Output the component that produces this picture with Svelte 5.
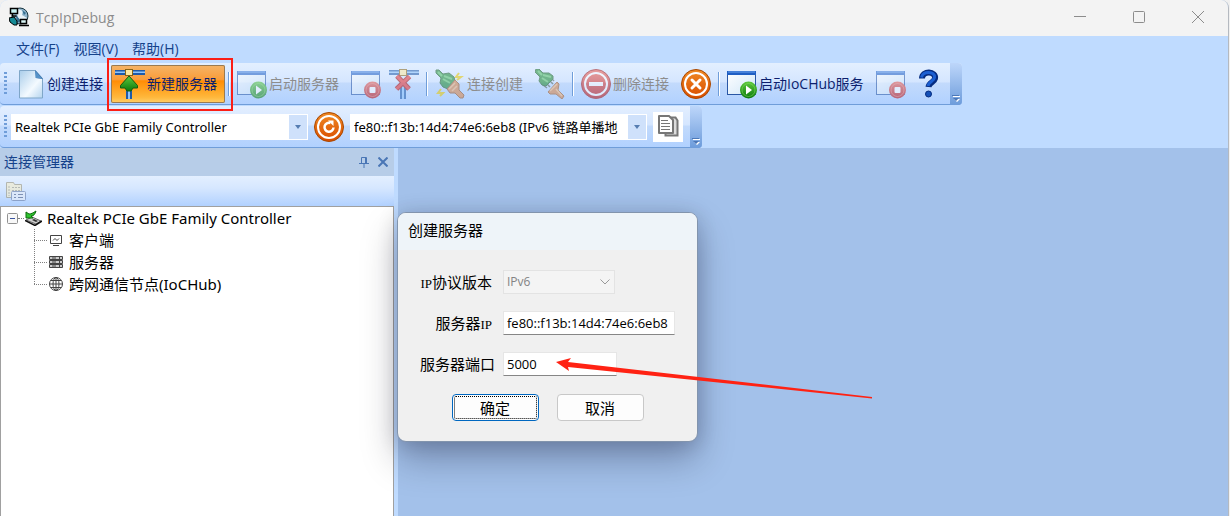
<script lang="ts">
    type Tool = {
        icon?: string;
        label?: string;
        disabled?: boolean;
        active?: boolean;
        sep?: boolean;
    };

    const menus = ["文件(F)", "视图(V)", "帮助(H)"];

    const tools: Tool[] = [
        { icon: "page", label: "创建连接" },
        { icon: "server", label: "新建服务器", active: true },
        { sep: true },
        { icon: "start", label: "启动服务器", disabled: true },
        { icon: "stop", disabled: true },
        { icon: "drop", disabled: true },
        { sep: true },
        { icon: "plug", label: "连接创建", disabled: true },
        { icon: "unplug", disabled: true },
        { sep: true },
        { icon: "minus", label: "删除连接", disabled: true },
        { icon: "cancel" },
        { sep: true },
        { icon: "start", label: "启动IoCHub服务" },
        { icon: "stop", disabled: true },
        { icon: "help" },
    ];

    const nodes = [
        { icon: "client", label: "客户端" },
        { icon: "rack", label: "服务器" },
        { icon: "globe", label: "跨网通信节点(IoCHub)" },
    ];

    let ip = $state("fe80::f13b:14d4:74e6:6eb8");
    let port = $state("5000");
    let dialogOpen = $state(true);
    let expanded = $state(true);

    const close = () => (dialogOpen = false);
</script>

<svg class="defs" width="0" height="0" aria-hidden="true">
    <defs>
        <linearGradient id="paper" x1="0" y1="0" x2="1" y2="1">
            <stop offset="0" stop-color="#a9cdea" />
            <stop offset="0.6" stop-color="#f4faff" />
            <stop offset="1" stop-color="#b4d4ee" />
        </linearGradient>
        <linearGradient id="pane" x1="0" y1="0" x2="1" y2="1">
            <stop offset="0" stop-color="#ffffff" />
            <stop offset="1" stop-color="#cfe6f8" />
        </linearGradient>
        <linearGradient id="green" x1="0" y1="0" x2="0" y2="1">
            <stop offset="0" stop-color="#5cc83c" />
            <stop offset="1" stop-color="#0c7a0c" />
        </linearGradient>
        <linearGradient id="red" x1="0" y1="0" x2="0" y2="1">
            <stop offset="0" stop-color="#f06050" />
            <stop offset="1" stop-color="#b80c0c" />
        </linearGradient>
        <linearGradient id="orange" x1="0" y1="0" x2="0" y2="1">
            <stop offset="0" stop-color="#f08a24" />
            <stop offset="1" stop-color="#d84c00" />
        </linearGradient>
    </defs>
</svg>

{#snippet glyph(name: string | undefined)}
    <svg class="icon" width="30" height="30" viewBox="0 0 30 30" aria-hidden="true">
        {#if name === "page"}
            <path d="M4.500 1.500h16l7 8v19.500h-23z" fill="url(#paper)" stroke="#7fa6c8" />
            <path d="M20 1l8 9-7-1z" fill="#2a66a4" />
            <path d="M20.500 9V2l6.500 7.500z" fill="#5592c8" />
        {:else if name === "server" || name === "drop"}
            <path d="M0 1h30v5H0zM11 14h6v16h-6z" fill="#1f5aa8" />
            <path d="M0 2.500h30v1.500H0zM13 14h2v16h-2z" fill="#8fc4fa" />
            <rect x="10.500" y="0.500" width="7" height="6" fill="#ffe9a0" stroke="#8a6414" />
            {#if name === "server"}
                <path d="M14 7l8.500 9.500v2.500h-4.500l-2 3h-4l-2-3H5.500v-2.500z" fill="url(#green)" stroke="#125c10" />
            {:else}
                <path d="M8 7l12 13M20.500 7.500L7.500 20" stroke="#a80d0d" stroke-width="5" />
                <path d="M8 7l12 13M20.500 7.500L7.500 20" stroke="#e83030" stroke-width="3" />
            {/if}
        {:else if name === "start" || name === "stop"}
            <rect x="0.500" y="2.500" width="28" height="23" fill="url(#pane)" stroke="#2a57a5" />
            <path d="M0 2h29v4H0z" fill="#1f5fc4" />
            <path d="M1 2.500h27v1H1z" fill="#6da5ee" />
            {#if name === "start"}
                <circle cx="21.500" cy="21" r="8.500" fill="url(#green)" />
                <circle cx="21.500" cy="21" r="6.500" fill="none" stroke="#8ce066" stroke-opacity="0.5" />
                <path d="M19 16.500l6 4.500-6 4.500z" fill="#fff" />
            {:else}
                <circle cx="21.500" cy="21" r="8.500" fill="url(#red)" />
                <circle cx="21.500" cy="21" r="6.500" fill="none" stroke="#ff9a8c" stroke-opacity="0.5" />
                <rect x="18.500" y="18" width="6" height="6" rx="1" fill="#fff" />
            {/if}
        {:else if name === "plug"}
            <path d="M24 4l-3 4h5l-4 3M6 20l-3 4h5l-3 3" fill="none" stroke="#e8c800" stroke-width="2" />
            <path d="M1 1h3l4 4 6-1 5 4 1 4-7 8-5-2-3-4 1-5-5-5z" fill="#1d8a30" stroke="#185c22" />
            <path d="M9 7l8 3M8 10l7 4M3 3l4 4" stroke="#57c062" stroke-width="2" />
            <path d="M20 11l4 4 0 6 5 5-1 3-3 0-5-5-5 0-3-4z" fill="#d98444" stroke="#955322" />
            <path d="M20 14l-6 6M22 17l-5 5" stroke="#f0b47c" stroke-width="1.500" />
        {:else if name === "unplug"}
            <path d="M11 14l4 4M14 11l4 4M8 16l4 3M16 9l3 3" stroke="#55685a" stroke-width="1.500" />
            <path d="M1 0h3l4 4 6 0 4 3 0 3-7 7-4-1-3-4 1-4-5-5z" fill="#1d8a30" stroke="#185c22" />
            <path d="M8 6l8 2M7 9l6 4M3 2l4 4" stroke="#57c062" stroke-width="2" />
            <path d="M22 13l2 2-1 6 6 6-2 3-6-5-6 0-2-2z" fill="#d98444" stroke="#a05a24" />
            <path d="M22 15l-7 7M21 20l6 7" stroke="#f3b77c" stroke-width="1.500" />
        {:else if name === "minus" || name === "cancel" || name === "refresh"}
            <circle cx="15" cy="15" r="14.500" fill={name === "minus" ? "url(#red)" : "url(#orange)"} stroke={name === "minus" ? "#a01414" : "#a84800"} />
            <circle cx="15" cy="15" r="11" fill="none" stroke="#fff" stroke-width="2" />
            {#if name === "minus"}
                <path d="M8 15h14" stroke="#fff" stroke-width="4" />
            {:else if name === "cancel"}
                <path d="M11 11l8 8M19 11l-8 8" stroke="#fff" stroke-width="3" stroke-linecap="round" />
            {:else}
                <path d="M19.500 15.500a4.500 4.500 0 1 1-3-4.500" fill="none" stroke="#fff" stroke-width="2.500" />
                <path d="M14 8.500h5.500v5.500z" fill="#fff" />
            {/if}
        {:else if name === "help"}
            <path d="M8 9.500c0-8.500 14.500-7.500 13 0-1 4-6 4-6.500 8.500" fill="none" stroke="#062c80" stroke-width="6" />
            <path d="M7.500 8.500c1-7 14-6.500 13 0-.5 4-6 4-6.500 8.500" fill="none" stroke="#1c5fd2" stroke-width="3" />
            <circle cx="14.500" cy="25" r="3" fill="#1450b8" stroke="#062c80" />
        {:else if name === "copy"}
            <path d="M12.500 5.500h10l2 3v15h-12z" fill="#ddd" stroke="#777" stroke-width="2" />
            <path d="M6 4h10l4 4v13H6z" fill="#fff" stroke="#777" stroke-width="2" stroke-linejoin="round" />
            <path d="M8 8.500h7M8 11.500h9M8 14.500h9M8 17.500h9" stroke="#777" />
        {/if}
    </svg>
{/snippet}

{#snippet cap()}
    <button class="cap" aria-label="更多">
        <svg width="8" height="8" viewBox="0 0 8 8">
            <path d="M1 2h7v1H1zM2 5h6L5 8z" fill="#fff" />
            <path d="M0 1h7v1H0zM1 4h6L4 7z" fill="#4c78b8" />
        </svg>
    </button>
{/snippet}

<div class="window">
    <header class="titlebar">
        <svg width="20" height="20" viewBox="0 0 20 20" aria-hidden="true">
            <circle cx="11" cy="9" r="8" fill="#8fb4cc" stroke="#17343f" />
            <path d="M9 2l5 2-1 4 5 3-3 5-5-3-2-6z" fill="#e9f3f8" />
            <path d="M13 3l4 3-2 2zM7 8l5 6-4 2z" fill="#356f91" />
            <path d="M1.500 1.500h7v5h-7zM3.500 7v2h4" fill="#c9f3f3" stroke="#000" stroke-width="1.500" />
            <path d="M0 11l5-1 3 4v4H5l-4-3z" fill="#168b96" stroke="#000" />
            <path d="M11.500 12.500h6v4h-6zM10 18.500h10" fill="#d8f5f5" stroke="#000" stroke-width="1.500" />
        </svg>
        <h1>TcpIpDebug</h1>
        <div class="controls">
            <button aria-label="最小化"><svg width="12" height="12" viewBox="0 0 12 12"><path d="M0 5.500h12" /></svg></button>
            <button aria-label="最大化"><svg width="12" height="12" viewBox="0 0 12 12"><rect x="0.500" y="0.500" width="11" height="11" rx="1" /></svg></button>
            <button aria-label="关闭"><svg width="12" height="12" viewBox="0 0 12 12"><path d="M0 0l12 12M12 0L0 12" /></svg></button>
        </div>
    </header>

    <nav class="menubar">
        {#each menus as menu}
            <button>{menu}</button>
        {/each}
    </nav>

    <div class="toolbar">
        <span class="grip"></span>
        {#each tools as tool}
            {#if tool.sep}
                <span class="sep"></span>
            {:else}
                <button class="tool" class:active={tool.active} disabled={tool.disabled} aria-label={tool.label ?? tool.icon}>
                    {@render glyph(tool.icon)}
                    {#if tool.label}<span>{tool.label}</span>{/if}
                </button>
            {/if}
        {/each}
        {@render cap()}
    </div>

    <div class="toolbar adapters">
        <span class="grip"></span>
        <div class="combo">
            <select aria-label="网卡"><option>Realtek PCIe GbE Family Controller</option></select>
            <span class="arrow"></span>
        </div>
        <button class="plain" aria-label="刷新">{@render glyph("refresh")}</button>
        <div class="combo">
            <select aria-label="地址"><option>fe80::f13b:14d4:74e6:6eb8 (IPv6 链路单播地</option></select>
            <span class="arrow"></span>
        </div>
        <button class="plain copy" aria-label="复制">{@render glyph("copy")}</button>
        {@render cap()}
    </div>

    <main>
        <aside>
            <div class="caption">
                <h2>连接管理器</h2>
                <button aria-label="固定"><svg width="10" height="12" viewBox="0 0 10 12"><path d="M2.500 7V1.500h5V7M6.500 2v5M0 7.500h10M5 8v4" /></svg></button>
                <button aria-label="关闭"><svg width="10" height="10" viewBox="0 0 10 10"><path d="M0.500 0.500l9 9M9.500 0.500l-9 9" stroke-width="2" /></svg></button>
            </div>
            <div class="panel-tools">
                <button disabled aria-label="属性">
                    <svg width="20" height="19" viewBox="0 0 20 19">
                        <path d="M0.500 0.500h7l1 2h7v13h-15z" fill="#f3ecc9" stroke="#9a957c" />
                        <path d="M3 4v10M6 5.500h8M6 8.500h8" stroke="#a09c88" stroke-dasharray="2 1" />
                        <rect x="5.500" y="9.500" width="14" height="9" rx="1" fill="#e8eef8" stroke="#6b7fa8" />
                        <path d="M8 12.500h2M12 12.500h5M8 15.500h2M12 15.500h5" stroke="#4f5f85" />
                    </svg>
                </button>
            </div>
            <div class="tree">
                <div class="root">
                    <button class="expander" aria-label="展开" onclick={() => (expanded = !expanded)}>
                        <svg width="11" height="11" viewBox="0 0 11 11"><rect x="0.500" y="0.500" width="10" height="10" rx="1" fill="#f8f8f8" stroke="#919191" /><path d="M3 5.500h5" stroke="#3c56a0" /></svg>
                    </button>
                    <span class="dots"></span>
                    <svg width="17" height="16" viewBox="0 0 17 16" aria-hidden="true">
                        <path d="M1 10l6-3 9 4-5 3z" fill="#d0d0d0" stroke="#666" />
                        <path d="M0 10.500l10 5 7-4.500" fill="none" stroke="#111" stroke-width="1.500" />
                        <path d="M9 9l4 2-2 1-4-2z" fill="#333" />
                        <path d="M1 2l0 6 7 0-2-2c3 0 4-2 5-5-3 2-5 3-7 3z" fill="#2fc42f" stroke="#0d6b0d" />
                    </svg>
                    <span>Realtek PCIe GbE Family Controller</span>
                </div>
                {#if expanded}
                    <ul>
                        {#each nodes as node}
                            <li>
                                <svg width="14" height="14" viewBox="0 0 14 14" fill="none" stroke="#444" aria-hidden="true">
                                    {#if node.icon === "client"}
                                        <path d="M1.500 2.500h11v8h-11zM4 12.500h6M4 7.500l2-2 2 2 2-2" />
                                    {:else if node.icon === "rack"}
                                        <path d="M0.500 1.500h13v3h-13zM0.500 5.500h13v3h-13zM0.500 9.500h13v3h-13z" fill="#ccc" />
                                        <path d="M3 3h4M3 7h4M3 11h4M10.500 1v12" />
                                    {:else}
                                        <circle cx="7" cy="7" r="6.500" />
                                        <ellipse cx="7" cy="7" rx="3" ry="6.500" />
                                        <path d="M7 0v14M0.500 7h13M2 3.500h10M2 10.500h10" />
                                    {/if}
                                </svg>
                                <span>{node.label}</span>
                            </li>
                        {/each}
                    </ul>
                {/if}
            </div>
        </aside>
        <section class="workspace"></section>
    </main>

    {#if dialogOpen}
        <div class="dialog" role="dialog" aria-labelledby="dialog-title">
            <h2 id="dialog-title">创建服务器</h2>
            <form onsubmit={(e) => e.preventDefault()}>
                <div class="fields">
                    <label for="version"><small>IP</small>协议版本</label>
                    <div class="version">
                        <select id="version" disabled><option>IPv6</option></select>
                        <svg width="10" height="6" viewBox="0 0 10 6" aria-hidden="true"><path d="M0.500 0.500l4.500 4.500 4.500-4.500" fill="none" stroke="#999" /></svg>
                    </div>
                    <label for="ip">服务器<small>IP</small></label>
                    <input id="ip" bind:value={ip} />
                    <label for="port">服务器端口</label>
                    <input id="port" class="short" bind:value={port} />
                </div>
                <div class="actions">
                    <button class="default" type="submit" onclick={close}>确定</button>
                    <button type="button" onclick={close}>取消</button>
                </div>
            </form>
            <svg class="pointer" width="316" height="44" viewBox="0 0 316 44" aria-hidden="true">
                <path d="M0 7L15 3l-3 4 304 35v1.500L12 12l1 4z" fill="#ff2213" />
            </svg>
        </div>
    {/if}
</div>

<style>
    :global(body) {
        margin: 0;
        background: #f0f0f0;
    }

    .window {
        position: relative;
        display: flex;
        flex-direction: column;
        box-sizing: border-box;
        min-height: 100vh;
        margin-right: 1px;
        overflow: hidden;
        border-right: 1px solid #b4b9c0;
        border-radius: 8px 8px 0 0;
        background: #bfdbff;
        font-family: "Open Sans", "Noto Sans CJK SC", sans-serif;
        font-size: 14px;
        line-height: 20px;
    }

    .defs {
        position: absolute;
    }

    button,
    input,
    select {
        margin: 0;
        padding: 0;
        border: 0;
        background: none;
        color: inherit;
        font: inherit;
    }

    select {
        appearance: none;
        opacity: 1;
    }

    svg {
        display: block;
        flex: none;
    }

    h1,
    h2 {
        margin: 0;
        font-size: 14px;
        font-weight: 400;
    }

    .titlebar {
        display: flex;
        align-items: center;
        gap: 7px;
        height: 36px;
        padding-left: 9px;
        background: #f3f3f3;
        color: #8c8c8c;
    }

    .titlebar > svg {
        margin-bottom: 2px;
    }

    .controls {
        display: flex;
        align-self: stretch;
        margin-left: auto;
    }

    .controls button {
        display: grid;
        place-items: center;
        width: 59px;
        padding: 0 1px 2px 0;
    }

    .controls path,
    .controls rect {
        fill: none;
        stroke: #8c8c8c;
    }

    .menubar {
        display: flex;
        align-items: center;
        gap: 14px;
        height: 26px;
        padding-left: 16px;
        color: #15428b;
    }

    .menubar button {
        line-height: 22px;
    }

    .toolbar {
        display: flex;
        align-self: flex-start;
        box-sizing: border-box;
        height: 42px;
        margin-top: 1px;
        border-bottom: 1px solid #6f9dd9;
        border-radius: 4px;
        background: linear-gradient(#e3efff, #d5e6ff 45%, #c2dafc 50%, #b1d1ff);
        color: #0c1f6e;
    }

    .grip {
        width: 3px;
        margin: 9px 4px 8px 4px;
        background: repeating-linear-gradient(#6f9dd9 0 2px, transparent 2px 4px);
    }

    .sep {
        width: 1px;
        margin: 9px 4px 8px 3px;
        background: #6f9dd9;
        box-shadow: 1px 0 #fff;
    }

    .tool {
        display: flex;
        align-items: center;
        gap: 2px;
        box-sizing: border-box;
        height: 38px;
        margin-top: 2px;
        padding: 0 8px 0 4px;
        white-space: nowrap;
    }

    .tool:not(:has(span)) {
        padding-right: 4px;
    }

    .tool.active {
        position: relative;
        border-radius: 2px;
        background: linear-gradient(#f4b468, #fa9d3a 38%, #ff8d05 42%, #ffb83c 85%, #ffcf6a);
        box-shadow: inset 0 0 0 1px #9a7a50;
    }

    .tool.active::after {
        content: "";
        position: absolute;
        inset: -7px -8px -8px -4px;
        border: 2px solid #fb1e16;
        pointer-events: none;
    }

    .tool:disabled {
        color: #8d8d8d;
    }

    .tool:disabled .icon {
        opacity: 0.55;
    }

    .cap {
        display: flex;
        align-items: flex-end;
        justify-content: center;
        width: 12px;
        margin: 0 0 -1px 2px;
        padding-bottom: 3px;
        border-radius: 0 4px 4px 0;
        background: linear-gradient(#bdd6fa, #6d9cdb);
    }

    .adapters {
        align-items: center;
        color: #000;
    }

    .adapters .grip,
    .adapters .cap {
        align-self: stretch;
    }

    .combo {
        display: flex;
        width: 297px;
        height: 26px;
        background: #fff;
        font-family: "Noto Sans", "Noto Sans CJK SC", sans-serif;
        font-size: 13px;
    }

    .combo select {
        flex: 1;
        min-width: 0;
        padding-left: 4px;
    }

    .combo .arrow {
        display: grid;
        place-items: center;
        width: 18px;
        margin: 1px;
        background: #cfe1fb;
        pointer-events: none;
    }

    .arrow::after {
        content: "";
        border: solid transparent;
        border-width: 4px 3px 0;
        border-top-color: #567db1;
    }

    .plain {
        margin: 0 6px;
    }

    .copy {
        margin-right: 5px;
        background: #fff;
    }

    main {
        display: flex;
        flex: 1;
    }

    aside {
        display: flex;
        flex-direction: column;
        width: 394px;
        margin-right: 4px;
    }

    .caption {
        display: flex;
        align-items: center;
        gap: 9px;
        height: 28px;
        padding: 0 6px 0 4px;
        background: #b7cde8;
        color: #15428b;
    }

    .caption h2 {
        margin-right: auto;
    }

    .caption path {
        fill: none;
        stroke: #4a76b5;
    }

    .panel-tools {
        display: flex;
        align-items: center;
        height: 30px;
        padding-left: 6px;
        background: linear-gradient(#e3efff, #d6e7ff 40%, #b1d1ff);
    }

    .panel-tools svg {
        opacity: 0.6;
    }

    .tree {
        flex: 1;
        border: 1px solid #a0a0a0;
        border-bottom: 0;
        background: #fff;
        color: #000;
        font-family: "Noto Sans", "Noto Sans CJK SC", sans-serif;
        font-size: 15px;
        line-height: 22px;
    }

    .root {
        display: flex;
        align-items: center;
        padding-left: 6px;
    }

    .dots {
        width: 6px;
        margin-right: 1px;
        border-top: 1px dotted #808080;
    }

    .root > svg {
        margin-right: 5px;
    }

    ul {
        margin: 0;
        padding: 0 0 0 33px;
        list-style: none;
    }

    li {
        display: flex;
        align-items: center;
        height: 22px;
        background:
            repeating-linear-gradient(#808080 0 1px, transparent 1px 2px) 0 0 / 1px 100% no-repeat,
            repeating-linear-gradient(90deg, #808080 0 1px, transparent 1px 2px) 0 11px / 13px 1px no-repeat;
    }

    li:last-child {
        background-size:
            1px 11px,
            13px 1px;
    }

    li svg {
        margin: 0 6px 0 15px;
    }

    .workspace {
        flex: 1;
        background: #a3c1ea;
    }

    .dialog {
        position: absolute;
        top: 212px;
        left: 397px;
        box-sizing: border-box;
        width: 301px;
        border: 1px solid #8294ad;
        border-radius: 9px;
        background: #f0f0f0;
        box-shadow:
            0 18px 36px rgba(0, 0, 30, 0.28),
            0 2px 20px rgba(0, 0, 30, 0.16);
        color: #000;
    }

    .dialog h2 {
        height: 37px;
        padding-left: 10px;
        border-radius: 8px 8px 0 0;
        background: #eef4f9;
        font-size: 15px;
        line-height: 34px;
    }

    form {
        padding: 20px 22px;
    }

    .fields {
        display: grid;
        grid-template-columns: 73px 1fr;
        grid-auto-rows: 24px;
        align-items: center;
        gap: 17px 10px;
    }

    label {
        padding-right: 1px;
        font-family: "Noto Sans CJK SC", sans-serif;
        font-size: 15px;
        line-height: 24px;
        text-align: right;
        white-space: nowrap;
    }

    small {
        font-family: "Liberation Serif", serif;
        font-size: 13px;
        line-height: 1;
    }

    .fields input,
    .fields select {
        box-sizing: border-box;
        width: 100%;
        height: 24px;
        padding: 0 3px;
        border: 1px solid #e6e6e6;
        border-bottom-color: #868686;
        background: #fff;
        font-size: 13px;
    }

    .fields .short {
        width: 114px;
    }

    .version {
        display: grid;
        align-items: center;
        width: 112px;
    }

    .version select,
    .version svg {
        grid-area: 1 / 1;
    }

    .version svg {
        justify-self: end;
        margin-right: 5px;
    }

    .fields .version select {
        border-color: #e3e3e3;
        background: #f4f4f4;
        color: #838383;
        font-size: 12px;
    }

    .actions {
        display: flex;
        justify-content: center;
        gap: 18px;
        padding-top: 18px;
    }

    .actions button {
        width: 87px;
        height: 27px;
        border: 1px solid #c8c8c8;
        border-radius: 4px;
        background: #fdfdfd;
        font-size: 15px;
    }

    .actions .default {
        border-color: #0067c0;
        outline: 1px dotted #000;
        outline-offset: -3px;
    }

    .pointer {
        position: absolute;
        top: 142px;
        left: 158px;
        pointer-events: none;
    }
</style>
